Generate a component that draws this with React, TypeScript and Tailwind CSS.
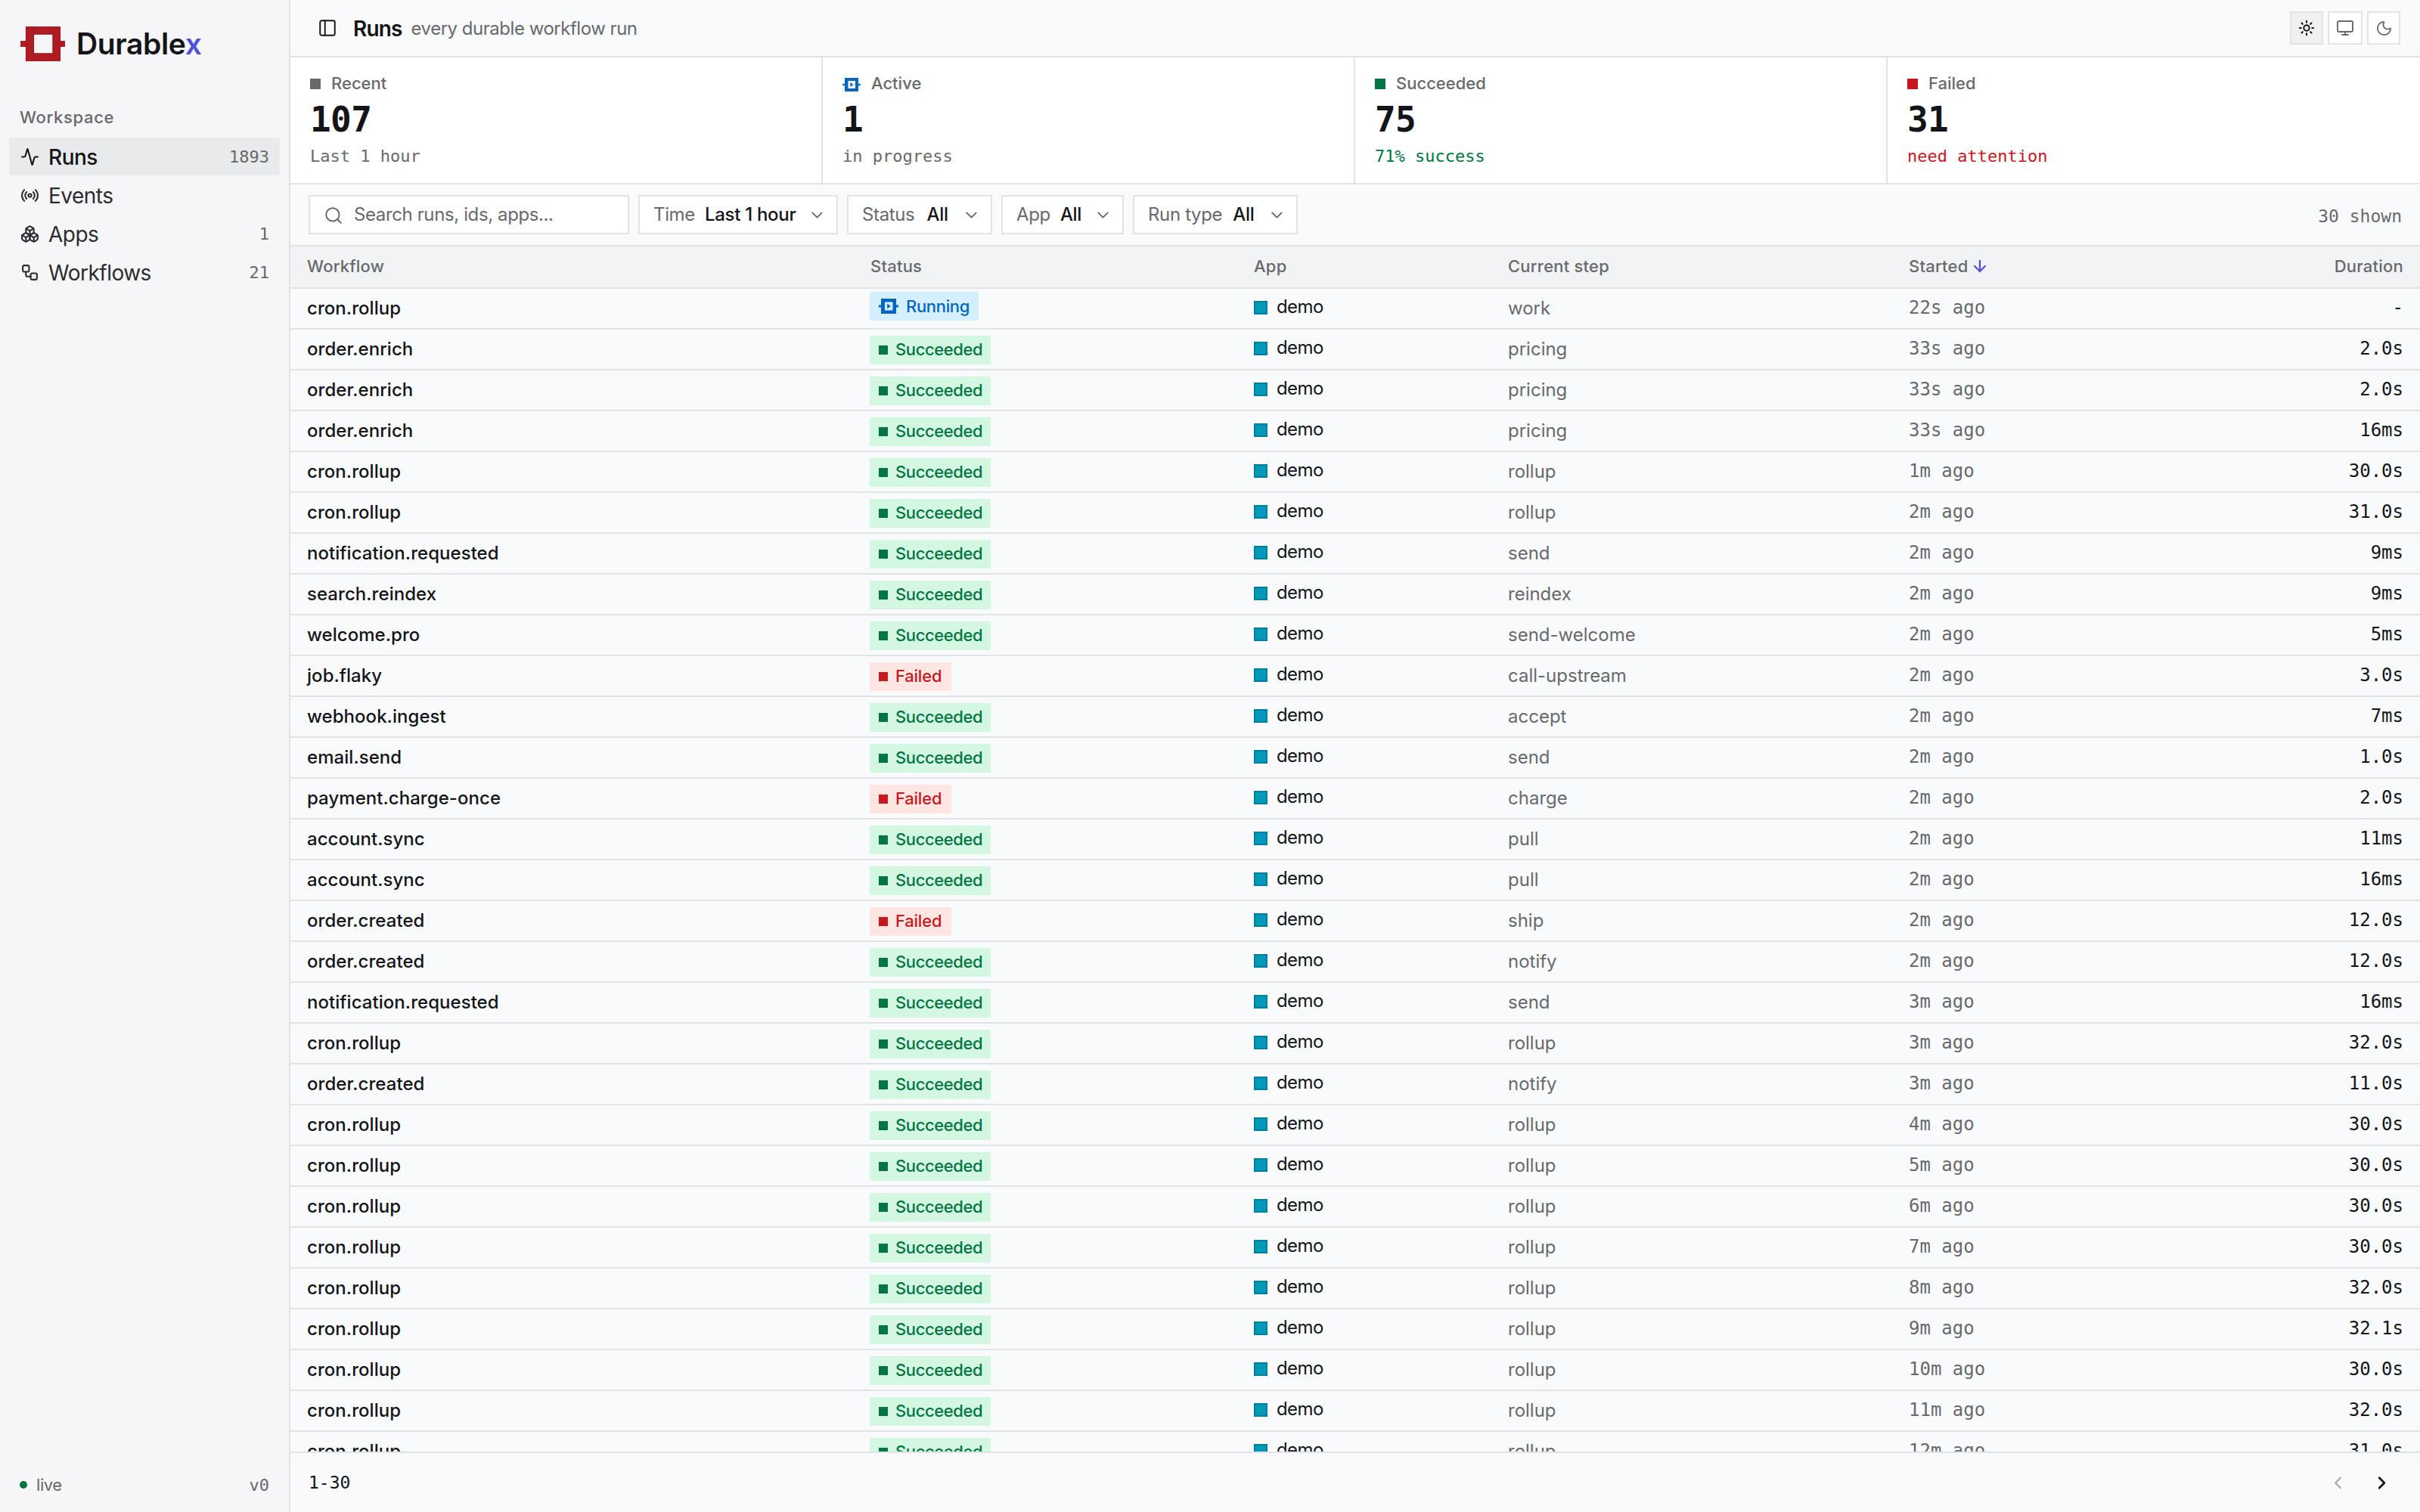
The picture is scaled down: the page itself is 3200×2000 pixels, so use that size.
import React from 'react';
import {
  Activity,
  ArrowDown,
  Boxes,
  ChevronDown,
  ChevronLeft,
  ChevronRight,
  Monitor,
  Moon,
  PanelLeft,
  Radio,
  Search,
  Sun,
  Workflow,
} from 'lucide-react';

type Status = 'Running' | 'Succeeded' | 'Failed';

const MONO = "font-['DejaVu_Sans_Mono',monospace]";
const COLS = 'grid grid-cols-[744px_508px_336px_530px_400px_1fr]';

const runs: [string, Status, string, string, string][] = [
  ['cron.rollup', 'Running', 'work', '22s ago', '-'],
  ['order.enrich', 'Succeeded', 'pricing', '33s ago', '2.0s'],
  ['order.enrich', 'Succeeded', 'pricing', '33s ago', '2.0s'],
  ['order.enrich', 'Succeeded', 'pricing', '33s ago', '16ms'],
  ['cron.rollup', 'Succeeded', 'rollup', '1m ago', '30.0s'],
  ['cron.rollup', 'Succeeded', 'rollup', '2m ago', '31.0s'],
  ['notification.requested', 'Succeeded', 'send', '2m ago', '9ms'],
  ['search.reindex', 'Succeeded', 'reindex', '2m ago', '9ms'],
  ['welcome.pro', 'Succeeded', 'send-welcome', '2m ago', '5ms'],
  ['job.flaky', 'Failed', 'call-upstream', '2m ago', '3.0s'],
  ['webhook.ingest', 'Succeeded', 'accept', '2m ago', '7ms'],
  ['email.send', 'Succeeded', 'send', '2m ago', '1.0s'],
  ['payment.charge-once', 'Failed', 'charge', '2m ago', '2.0s'],
  ['account.sync', 'Succeeded', 'pull', '2m ago', '11ms'],
  ['account.sync', 'Succeeded', 'pull', '2m ago', '16ms'],
  ['order.created', 'Failed', 'ship', '2m ago', '12.0s'],
  ['order.created', 'Succeeded', 'notify', '2m ago', '12.0s'],
  ['notification.requested', 'Succeeded', 'send', '3m ago', '16ms'],
  ['cron.rollup', 'Succeeded', 'rollup', '3m ago', '32.0s'],
  ['order.created', 'Succeeded', 'notify', '3m ago', '11.0s'],
  ['cron.rollup', 'Succeeded', 'rollup', '4m ago', '30.0s'],
  ['cron.rollup', 'Succeeded', 'rollup', '5m ago', '30.0s'],
  ['cron.rollup', 'Succeeded', 'rollup', '6m ago', '30.0s'],
  ['cron.rollup', 'Succeeded', 'rollup', '7m ago', '30.0s'],
  ['cron.rollup', 'Succeeded', 'rollup', '8m ago', '32.0s'],
  ['cron.rollup', 'Succeeded', 'rollup', '9m ago', '32.1s'],
  ['cron.rollup', 'Succeeded', 'rollup', '10m ago', '30.0s'],
  ['cron.rollup', 'Succeeded', 'rollup', '11m ago', '32.0s'],
  ['cron.rollup', 'Succeeded', 'rollup', '12m ago', '31.0s'],
];

function Logo() {
  return (
    <svg width="59" height="46" viewBox="0 0 59 46" className="shrink-0">
      <path fill="#b01c24" fillRule="evenodd" d="M7 0h46v46H7zM18 10.500v25h24.500v-25z" />
      <path fill="#b01c24" d="M0 19h7v8H0zM53 19h6v8h-6z" />
      <path stroke="#8f1a22" strokeWidth="0.8" fill="none" d="M17.600 0v46M43 0v46M7.400 0v46M52.600 0v46M18 10.300h24.500M18 35.700h24.500" />
    </svg>
  );
}

function RunningIcon({ className }: { className: string }) {
  return (
    <svg viewBox="0 0 26 20" className={className} fill="#0066c0">
      <path fillRule="evenodd" d="M3 0h20v20H3zM8 4.500v11h10.500v-11z" />
      <path d="M0 8.500h3v3H0zM23 8.500h3v3h-3zM11.200 6.600v6.800l4.600-3.400z" />
    </svg>
  );
}

function StatusPill({ status }: { status: Status }) {
  if (status === 'Running') {
    return (
      <span className="mt-1 flex h-[38px] w-36 items-center self-start bg-[#d4effe] pl-3 text-[22px] font-medium tracking-[-0.015em] text-[#0066c0]">
        <RunningIcon className="mr-2.5 h-5 w-[26px]" />
        Running
      </span>
    );
  }
  const ok = status === 'Succeeded';
  return (
    <span
      className={`mt-2 flex h-[38px] items-center self-start pb-px pl-3 text-[22px] font-medium ${
        ok ? 'w-40 bg-[#d4f7e1] tracking-[-0.018em] text-[#007544]' : 'w-[108px] bg-[#ffe6e2] tracking-[-0.01em] text-[#c9171e]'
      }`}
    >
      <i className={`mr-2.5 size-3 ${ok ? 'bg-[#007544]' : 'bg-[#c9171e]'}`} />
      {status}
    </span>
  );
}

function NavItem({ icon: Icon, label, count, active }: { icon: React.ElementType; label: string; count?: string; active?: boolean }) {
  return (
    <div className={`flex h-[50px] items-center pr-3.5 pl-[15px] ${active ? 'bg-[#e9eaec] text-[#141518]' : 'text-[#2b2c2f]'}`}>
      <Icon size={25} strokeWidth={2} className="shrink-0" />
      <span className={`ml-3 pt-0.5 text-[28px] leading-[34px] tracking-[-0.018em] ${active ? 'font-medium' : ''}`}>{label}</span>
      {count && <span className={`ml-auto text-[22px] text-[#67696d] ${MONO}`}>{count}</span>}
    </div>
  );
}

function Stat({ label, value, note, tone, mark }: { label: string; value: string; note: string; tone: string; mark: React.ReactNode }) {
  return (
    <div className="flex flex-col border-r-2 border-[#e2e3e5] pt-5 pl-[26px] last:border-r-0">
      <div className="flex h-7 items-center text-[22px] font-medium text-[#67696d]">
        {mark}
        {label}
      </div>
      <div className={`mt-2.5 h-12 text-[46px] leading-[48px] font-bold tracking-[-0.6px] ${MONO}`}>{value}</div>
      <div className={`mt-[11px] h-7 text-[22px] leading-7 ${MONO} ${tone}`}>{note}</div>
    </div>
  );
}

function Filter({ label, value, width, gap = 'gap-[13px]' }: { label: string; value: string; width: string; gap?: string }) {
  return (
    <div className={`flex h-[52px] items-center border-2 border-[#e2e3e5] bg-white pr-[13px] pl-[18px] text-2xl ${gap} ${width}`}>
      <span className="tracking-[-0.015em] text-[#67696d]">{label}</span>
      <span className="font-medium tracking-[-0.012em]">{value}</span>
      <ChevronDown size={25} strokeWidth={1.800} className="ml-auto text-[#67696d]" />
    </div>
  );
}

export default function App() {
  return (
    <div className="flex h-[2000px] w-[3200px] overflow-hidden bg-[#f9fafc] font-['Inter',sans-serif] text-[#141518]">
      {/* Sidebar */}
      <aside className="flex w-96 shrink-0 flex-col border-r-2 border-[#e2e3e5] bg-[#f6f6f8]">
        <div className="flex h-[116px] items-center pl-[27px]">
          <Logo />
          <span className="ml-[15px] text-[39px] font-semibold tracking-[-0.01em]">
            Durable<span className="text-[#5350d8]">x</span>
          </span>
        </div>
        <div className="mt-6 mb-3 flex h-[30px] items-center pl-[26px] text-[22px] font-medium tracking-[0.03em] text-[#67696d]">Workspace</div>
        <nav className="flex w-[370px] flex-col gap-px pl-3">
          <NavItem icon={Activity} label="Runs" count="1893" active />
          <NavItem icon={Radio} label="Events" />
          <NavItem icon={Boxes} label="Apps" count="1" />
          <NavItem icon={Workflow} label="Workflows" count="21" />
        </nav>
        <div className="mt-auto flex h-[72px] items-center pr-[26px] pl-[26px] text-[22px] text-[#67696d]">
          <i className="mr-3 size-2.5 rounded-full bg-[#007544]" />
          <span className="tracking-[-0.02em]">live</span>
          <span className={`ml-auto ${MONO}`}>v0</span>
        </div>
      </aside>

      <main className="flex min-w-0 flex-1 flex-col">
        {/* Top bar */}
        <header className="flex h-[76px] shrink-0 items-center border-b-2 border-[#e2e3e5] pr-[26px] pl-9">
          <PanelLeft size={26} strokeWidth={1.800} />
          <h1 className="ml-[21px] pt-0.5 text-[28px] font-semibold tracking-[-0.03em]">Runs</h1>
          <p className="ml-3 pt-0.5 text-2xl tracking-[-0.02em] text-[#67696d]">every durable workflow run</p>
          <div className="ml-auto flex gap-1.5">
            <button className="flex h-11 w-11 items-center justify-center border-2 border-[#e2e3e5] bg-[#eff0f2]">
              <Sun size={22} strokeWidth={2.200} />
            </button>
            <button className="flex h-11 w-[46px] items-center justify-center border-2 border-[#e2e3e5] bg-white text-[#67696d]">
              <Monitor size={24} strokeWidth={1.900} />
            </button>
            <button className="flex h-11 w-11 items-center justify-center border-2 border-[#e2e3e5] bg-white text-[#67696d]">
              <Moon size={23} strokeWidth={1.900} />
            </button>
          </div>
        </header>

        {/* Summary */}
        <section className="grid h-[168px] shrink-0 grid-cols-4 border-b-2 border-[#e2e3e5] bg-white">
          <Stat label="Recent" value="107" note="Last 1 hour" tone="text-[#67696d]" mark={<i className="mt-0.5 mr-3.5 size-3.5 bg-[#67696d]" />} />
          <Stat label="Active" value="1" note="in progress" tone="text-[#67696d]" mark={<RunningIcon className="mt-1 mr-3.5 h-[18px] w-6" />} />
          <Stat label="Succeeded" value="75" note="71% success" tone="text-[#007544]" mark={<i className="mt-0.5 mr-3.5 size-3.5 bg-[#007544]" />} />
          <Stat label="Failed" value="31" note="need attention" tone="text-[#c9171e]" mark={<i className="mt-0.5 mr-3.5 size-3.5 bg-[#c9171e]" />} />
        </section>

        {/* Filters */}
        <section className="flex h-20 shrink-0 items-center gap-3 px-6">
          <div className="flex h-[52px] w-[424px] items-center border-2 border-[#e2e3e5] bg-white pl-[18px] text-2xl tracking-[-0.016em] text-[#67696d]">
            <Search size={26} strokeWidth={1.800} className="mt-0.5 mr-3.5" />
            Search runs, ids, apps...
          </div>
          <Filter label="Time" value="Last 1 hour" width="w-[264px]" />
          <Filter label="Status" value="All" width="w-48" gap="gap-4" />
          <Filter label="App" value="All" width="w-[162px]" />
          <Filter label="Run type" value="All" width="w-[218px]" gap="gap-3.5" />
          <span className={`ml-auto pt-1 text-[23px] text-[#67696d] ${MONO}`}>30 shown</span>
        </section>

        {/* Runs table */}
        <div className={`${COLS} h-[58px] shrink-0 items-center border-y-2 border-[#e2e3e5] bg-[#f2f3f5] pb-0.5 text-[22px] font-medium tracking-[0.01em] text-[#67696d]`}>
          <span className="pl-[22px]">Workflow</span>
          <span className="pl-[23px]">Status</span>
          <span className="pl-[22px]">App</span>
          <span className="pl-[22px]">Current step</span>
          <span className="flex items-center pl-[22px]">
            Started
            <ArrowDown size={24} strokeWidth={2.300} className="ml-[3px] text-[#5350d8]" />
          </span>
          <span className="pr-[22px] text-right">Duration</span>
        </div>
        <div className="min-h-0 flex-1 overflow-hidden">
          {runs.map(([name, status, step, started, duration], i) => (
            <div key={i} className={`${COLS} h-[54px] border-b-2 border-[#e2e3e5] text-2xl leading-[51px]`}>
              <span className="pl-[22px] font-medium tracking-[0.002em]">{name}</span>
              <span className="flex pl-[22px]">
                <StatusPill status={status} />
              </span>
              <span className="flex h-[50px] items-center pl-[22px]">
                <i className="mr-3 size-[18px] border-2 border-[#007f9c] bg-[#0099b8]" />
                <span className="pb-[3px] leading-[47px] tracking-[-0.025em]">demo</span>
              </span>
              <span className="pl-[22px] text-[#67696d]">{step}</span>
              <span className={`pl-[22px] text-[#67696d] ${MONO}`}>{started}</span>
              <span className={`pr-[22px] text-right ${MONO}`}>{duration}</span>
            </div>
          ))}
        </div>

        {/* Pagination */}
        <footer className="flex h-20 shrink-0 items-center border-t-2 border-[#e2e3e5] pr-[22px] pl-6">
          <span className={`pt-px text-[23px] ${MONO}`}>1-30</span>
          <div className="ml-auto flex">
            <button className="flex w-[58px] justify-center text-[#a9abae]">
              <ChevronLeft size={27} strokeWidth={2} />
            </button>
            <button className="flex w-[58px] justify-center">
              <ChevronRight size={27} strokeWidth={2.400} />
            </button>
          </div>
        </footer>
      </main>
    </div>
  );
}
